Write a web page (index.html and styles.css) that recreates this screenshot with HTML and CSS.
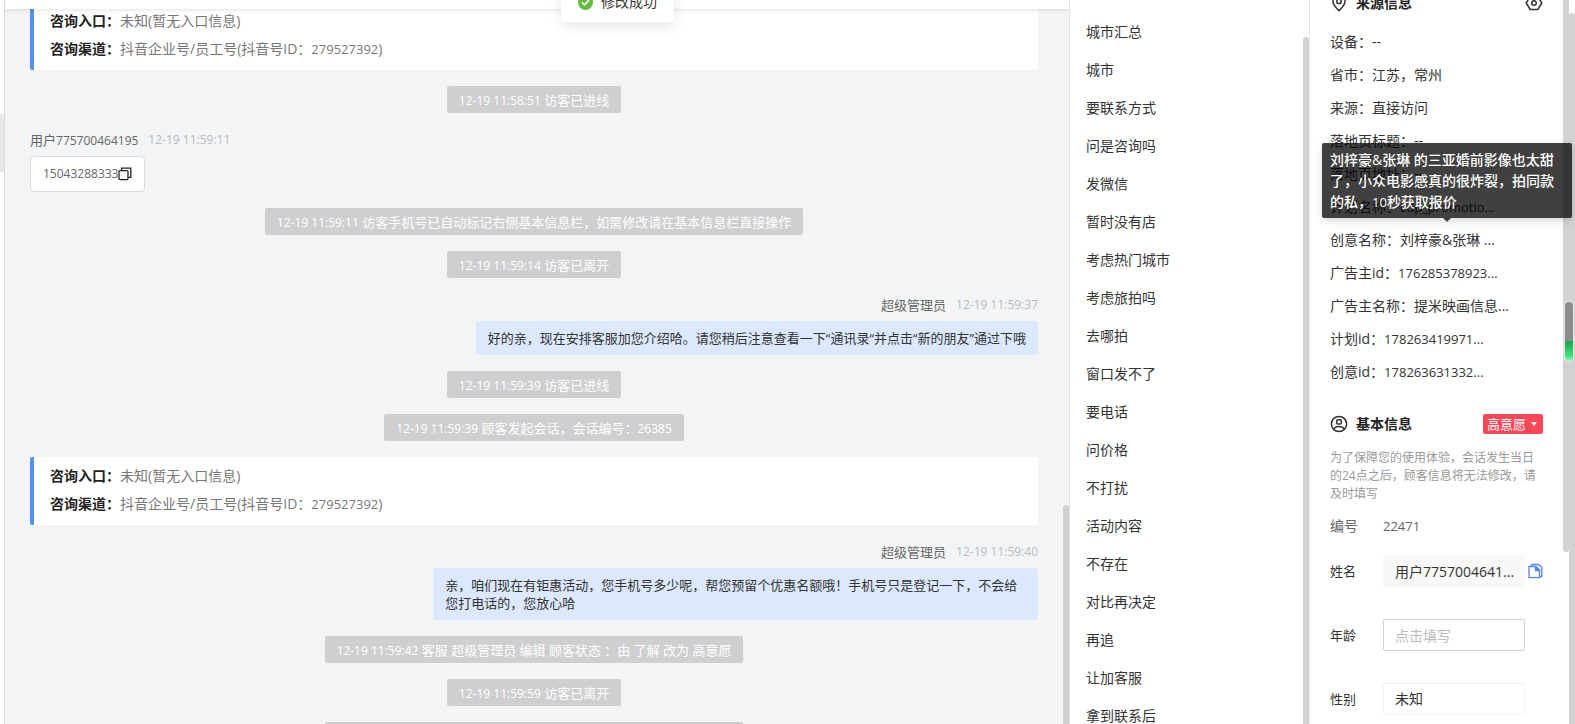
FILE: index.html
```html
<!DOCTYPE html>
<html lang="zh-CN">
<head>
<meta charset="utf-8">
<title>客服会话</title>
<link rel="stylesheet" href="styles.css">
</head>
<body>
<div class="app">
  <aside class="rail"><div class="rail-active"></div></aside>

  <main class="chat">
    <header class="chat-header"></header>
    <div class="toast" role="status">
      <svg class="toast-icon" viewBox="0 0 16 16"><circle cx="8" cy="8" r="8" fill="#67b944"/><path d="M4.6 8.2 7 10.5 11.4 6" fill="none" stroke="#fff" stroke-width="1.6" stroke-linecap="round" stroke-linejoin="round"/></svg>
      <span>修改成功</span>
    </div>
    <div class="chat-body">
      <section class="entry entry-first">
        <p><b>咨询入口：</b>未知(暂无入口信息)</p>
        <p><b>咨询渠道：</b>抖音企业号/员工号(抖音号ID：<span class="num">279527392</span>)</p>
      </section>
      <div class="notice"><time>12-19 11:58:51</time> 访客已进线</div>
      <article class="msg">
        <div class="msg-head"><span class="who">用户<span class="num">775700464195</span></span><time>12-19 11:59:11</time></div>
        <div class="bubble bubble-in"><span class="num">15043288333</span><button class="icon-btn" aria-label="复制"><svg class="copy" viewBox="0 0 14 14" fill="none" stroke="#222" stroke-width="1.3"><rect x="1" y="3.6" width="9" height="9" rx="1"/><path d="M3.6 3.4V1.2h9.2v9.2h-2.4"/></svg></button></div>
      </article>
      <div class="notice"><time>12-19 11:59:11</time> 访客手机号已自动标记右侧基本信息栏，如需修改请在基本信息栏直接操作</div>
      <div class="notice"><time>12-19 11:59:14</time> 访客已离开</div>
      <article class="msg msg-out">
        <div class="msg-head"><span class="who">超级管理员</span><time>12-19 11:59:37</time></div>
        <div class="bubble">好的亲，现在安排客服加您介绍哈。请您稍后注意查看一下“通讯录“并点击“新的朋友”通过下哦</div>
      </article>
      <div class="notice"><time>12-19 11:59:39</time> 访客已进线</div>
      <div class="notice"><time>12-19 11:59:39</time> 顾客发起会话，会话编号：<span class="num">26385</span></div>
      <section class="entry">
        <p><b>咨询入口：</b>未知(暂无入口信息)</p>
        <p><b>咨询渠道：</b>抖音企业号/员工号(抖音号ID：<span class="num">279527392</span>)</p>
      </section>
      <article class="msg msg-out">
        <div class="msg-head"><span class="who">超级管理员</span><time>12-19 11:59:40</time></div>
        <div class="bubble">亲，咱们现在有钜惠活动，您手机号多少呢，帮您预留个优惠名额哦！手机号只是登记一下，不会给您打电话的，您放心哈</div>
      </article>
      <div class="notice"><time>12-19 11:59:42</time> 客服 超级管理员 编辑 顾客状态 ：由 了解 改为 高意愿</div>
      <div class="notice"><time>12-19 11:59:59</time> 访客已离开</div>
      <div class="notice"><time>12-19 11:59:59</time> 客服 超级管理员 编辑 顾客状态 ：由 了解 改为 高意愿</div>
    </div>
    <div class="thumb chat-thumb"></div>
  </main>

  <nav class="phrases">
    <ul>
      <li>城市汇总</li><li>城市</li><li>要联系方式</li><li>问是咨询吗</li><li>发微信</li>
      <li>暂时没有店</li><li>考虑热门城市</li><li>考虑旅拍吗</li><li>去哪拍</li><li>窗口发不了</li>
      <li>要电话</li><li>问价格</li><li>不打扰</li><li>活动内容</li><li>不存在</li>
      <li>对比再决定</li><li>再追</li><li>让加客服</li><li>拿到联系后</li>
    </ul>
    <div class="thumb phrases-thumb"></div>
  </nav>

  <aside class="info">
    <div class="info-body">
      <div class="sec-head sec-source">
        <svg class="sec-icon" viewBox="0 0 18 18" fill="none" stroke="#333" stroke-width="1.5"><path d="M9 16.6C5.400 13.200 3 10.600 3 7.400a6 6 0 0 1 12 0c0 3.200-2.400 5.800-6 9.200Z"/><circle cx="9" cy="7.400" r="2.200"/></svg>
        <h2>来源信息</h2>
        <button class="icon-btn push" aria-label="设置"><svg class="sec-icon" viewBox="0 0 18 18" fill="none" stroke="#333" stroke-width="1.500" stroke-linejoin="round"><path d="M5.200 2.500h7.600L16.800 9l-4 6.500H5.200L1.200 9Z"/><circle cx="9" cy="9" r="2.300"/></svg></button>
      </div>
      <ul class="facts">
        <li>设备：--</li>
        <li>省市：江苏，常州</li>
        <li>来源：直接访问</li>
        <li>落地页标题：--</li>
        <li>落地页地址：--</li>
        <li>计划名称：<span class="num">cdp_promotio...</span></li>
        <li class="has-tip">创意名称：刘梓豪&amp;张琳 ...
          <div class="tip" role="tooltip">刘梓豪&amp;张琳 的三亚婚前影像也太甜了，小众电影感真的很炸裂，拍同款的私，<span class="num">10</span>秒获取报价</div>
        </li>
        <li>广告主id：<span class="num">176285378923...</span></li>
        <li>广告主名称：提米映画信息...</li>
        <li>计划id：<span class="num">178263419971...</span></li>
        <li>创意id：<span class="num">178263631332...</span></li>
      </ul>
      <div class="sec-head sec-basic">
        <svg class="sec-icon" viewBox="0 0 18 18" fill="none" stroke="#333" stroke-width="1.500"><circle cx="9" cy="9" r="7.600"/><rect x="6.700" y="4.800" width="4.600" height="4.200" rx="1.200"/><path d="M3.800 14.300c.8-2 2.200-2.800 5.200-2.800s4.400.8 5.200 2.800"/></svg>
        <h2>基本信息</h2>
        <button class="badge push">高意愿<span class="caret"></span></button>
      </div>
      <p class="hint">为了保障您的使用体验，会话发生当日的24点之后，顾客信息将无法修改，请及时填写</p>
      <div class="id-row"><span>编号</span><span class="id-value">22471</span></div>
      <form class="fields">
        <div class="field"><label for="name">姓名</label><input id="name" class="control filled" value="用户7757004641..." readonly>
          <button type="button" class="icon-btn" aria-label="复制姓名"><svg class="doc" viewBox="0 0 16 16" fill="none" stroke="#4e86f7" stroke-width="1.300" stroke-linejoin="round"><path d="M4.500 3.500V1.500h6.800L14.800 4v9.500h-2"/><path d="M2 3.500h7L12.500 7v7.700H2Z"/><path d="M8.500 3.700v4h4Z" fill="#4e86f7"/></svg></button></div>
        <div class="field"><label for="age">年龄</label><input id="age" class="control" placeholder="点击填写"></div>
        <div class="field"><label for="sex">性别</label><select id="sex" class="control faint"><option>未知</option></select></div>
      </form>
    </div>
    <div class="thumb info-thumb"></div>
    <div class="thumb page-thumb"></div>
    <div class="meter"></div>
  </aside>
</div>
</body>
</html>
```

FILE: styles.css
```css
* { box-sizing: border-box; margin: 0; padding: 0; }

body {
  height: 100vh;
  overflow: hidden;
  background: #fff;
  color: #333;
  font: 14px/22px "Open Sans", "Noto Sans CJK SC", sans-serif;
}

ul { list-style: none; }
button, input, select { font: inherit; color: inherit; }
.num { font-size: 13px; line-height: 1; }
.icon-btn { display: flex; border: 0; background: none; }
.push { margin-left: auto; }
.thumb { position: absolute; width: 6px; background: #d2d2d2; }

.app {
  display: grid;
  grid-template-columns: 5px minmax(0, 1fr) 240px 266px;
  height: 100%;
}

.rail { border-right: 1px solid #d6d8db; padding-top: 114px; }
.rail-active { height: 58px; background: #e6e7e9; }

/* Conversation */
.chat {
  position: relative;
  display: flex;
  flex-direction: column;
  min-width: 0;
  overflow: hidden;
  background: #f3f4f6;
}
.chat-header {
  flex: none;
  height: 9px;
  background: #fff;
  box-shadow: 0 1px 4px rgba(0, 0, 0, .12);
  z-index: 1;
}
.chat-body {
  display: flex;
  flex-direction: column;
  gap: 16px;
  padding: 0 31px 0 25px;
  font-size: 13px;
  line-height: 18px;
}
.chat-body > * { flex: none; }
.chat-body .num, .chat-body time { font-size: 12px; }
.notice time { line-height: 1; }
.chat-thumb { right: 0; top: 505px; bottom: 0; border-radius: 3px 3px 0 0; background: #cfcfd0; }

.entry {
  border-left: 4px solid #5590f6;
  border-radius: 2px;
  padding: 5px 16px 7px;
  background: #fff;
  font-size: 14px;
  line-height: 28px;
  color: #777;
}
.entry b { color: #222; }
.chat-body .entry .num { font-size: 13px; }
.entry-first { margin-top: -7px; }

.notice {
  align-self: center;
  padding: 5px 12px 4px;
  border-radius: 2px;
  background: #cfcfd1;
  color: #fff;
}

.msg { display: flex; flex-direction: column; align-items: flex-start; gap: 5px; }
.msg-out { align-items: flex-end; }
.msg-head { display: flex; gap: 10px; height: 22px; line-height: 22px; }
.who { color: #666; }
.msg-head time { color: #b9bbbe; }
.bubble {
  max-width: 60%;
  padding: 8px 12px;
  border-radius: 4px;
  background: #dce8fd;
  color: #333;
}
.bubble-in {
  display: flex;
  align-items: center;
  height: 36px;
  border: 1px solid #d9dbde;
  background: #fff;
  color: #666;
}
.copy { width: 14px; height: 14px; }

.toast {
  position: absolute;
  z-index: 2;
  left: 556px;
  top: -18px;
  display: flex;
  align-items: center;
  gap: 8px;
  height: 40px;
  padding: 0 17px;
  border-radius: 4px;
  background: #fff;
  box-shadow: 0 4px 14px rgba(0, 0, 0, .1);
}
.toast-icon { width: 15px; height: 15px; }

/* Quick phrases */
.phrases {
  position: relative;
  overflow: hidden;
  padding: 13px 16px 0;
  border-left: 1px solid #e2e4e7;
  line-height: 38px;
}
.phrases-thumb { right: 0; top: 37px; bottom: 0; border-radius: 3px 3px 0 0; }

/* Visitor details */
.info {
  position: relative;
  border-left: 1px solid #e2e4e7;
  padding: 0 32px 0 20px;
}
.sec-head { display: flex; align-items: center; gap: 8px; }
.sec-head h2 { font-size: 14px; line-height: 20px; color: #222; }
.sec-icon { width: 18px; height: 18px; }
.sec-source { height: 20px; margin-top: -7px; }
.facts { padding: 12px 0 26px; line-height: 33px; white-space: nowrap; }
.has-tip { position: relative; }
.tip {
  position: absolute;
  z-index: 2;
  left: -8px;
  bottom: 38px;
  width: 250px;
  padding: 6px 8px;
  border-radius: 2px;
  background: rgba(0, 0, 0, .75);
  box-shadow: 0 3px 8px rgba(0, 0, 0, .15);
  color: #fff;
  font-weight: 500;
  line-height: 21px;
  white-space: normal;
}
.tip::after {
  content: "";
  position: absolute;
  left: 50%;
  top: 100%;
  margin-left: -4px;
  border: 4px solid transparent;
  border-top-color: #404040;
  border-bottom: 0;
}
.badge {
  display: flex;
  align-items: center;
  gap: 5px;
  height: 20px;
  padding: 0 4px;
  border: 0;
  border-radius: 2px;
  background: #fb4757;
  color: #fff;
  font-size: 13px;
  line-height: 20px;
}
.caret { margin-right: 2px; border: 3px solid transparent; border-top: 4px solid #fff; border-bottom: 0; }
.hint { padding: 15px 0 12px; font-size: 12px; line-height: 18px; color: #999; }
.id-row { display: grid; grid-template-columns: 53px 1fr; color: #666; }
.id-value { font-size: 13px; }
.fields { display: grid; gap: 32px; padding-top: 18px; }
.field { display: grid; grid-template-columns: 53px 142px 18px; align-items: center; font-size: 13px; }
.control {
  height: 32px;
  width: 100%;
  padding: 0 8px 0 11px;
  border: 1px solid #d0d0d0;
  border-radius: 2px;
  background: #fff;
  font-size: 14px;
  appearance: none;
  outline: 0;
}
.control::placeholder { color: #bbb; }
.filled { border-color: #f8f8f8; background: #f8f8f8; }
.faint { border-color: #f2f2f2; }
.doc { width: 16px; height: 16px; margin-left: 2px; }

.info-thumb { right: 6px; top: 0; height: 552px; border-radius: 0 0 3px 3px; }
.page-thumb { right: 0; top: 13px; bottom: 0; border-radius: 3px 3px 0 0; }
.meter {
  position: absolute;
  right: 2px;
  top: 302px;
  width: 8px;
  height: 59px;
  border-radius: 4px;
  background: linear-gradient(#8c8c8c 0 38px, #1fa54c 40px, #3fe57a 54px, #a5f5b8);
  box-shadow: 0 0 2px 1px rgba(255, 255, 255, .6);
}
```
